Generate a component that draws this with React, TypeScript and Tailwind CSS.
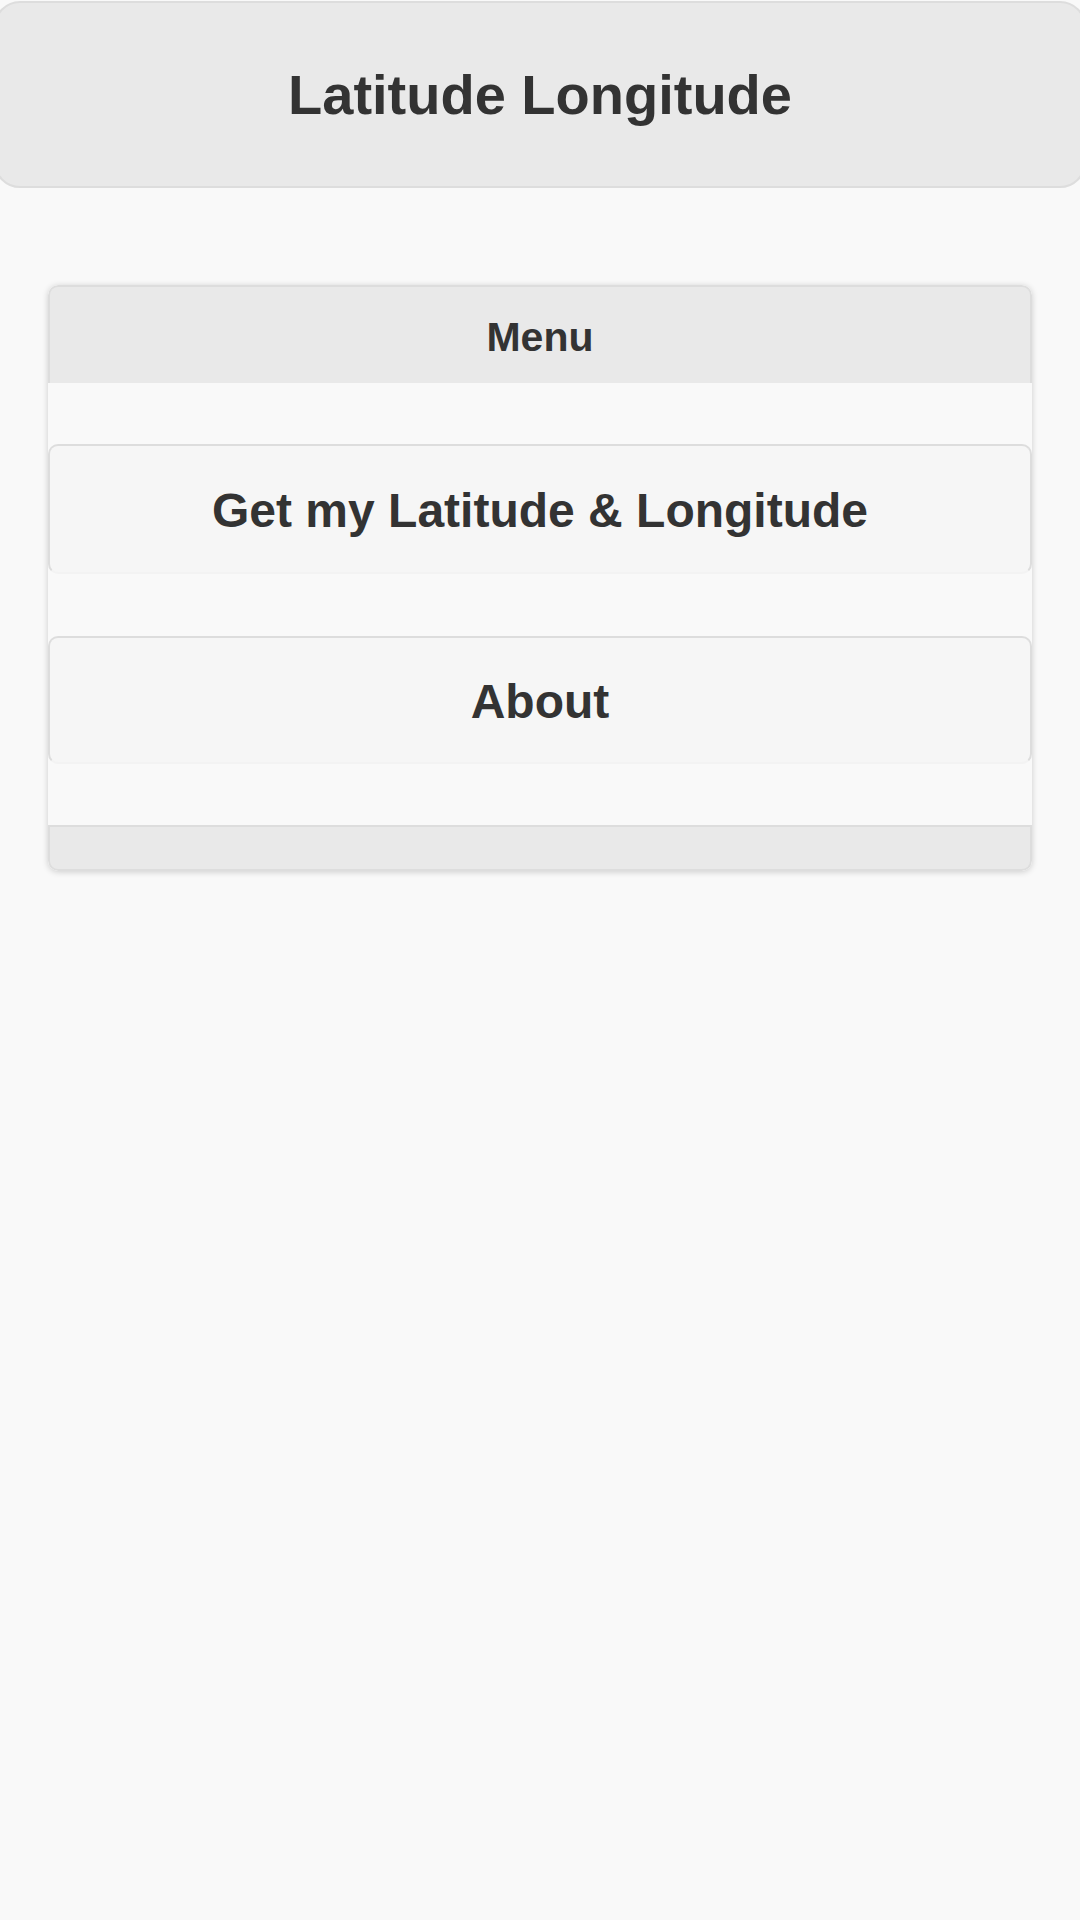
export default function App() {
  return (
    <div className="min-h-[1920px] bg-[#f9f9f9] text-[#333] overflow-hidden" style={{ fontFamily: '"Liberation Sans", Arial, sans-serif' }}>
      {/* top bar */}
      <div className="h-[187px] -mx-[6px] flex items-center justify-center bg-[#e9e9e9] border-2 border-[#dddddd] rounded-[26px] mt-[1px]">
        <h1 className="text-[56px] font-bold leading-none">Latitude Longitude</h1>
      </div>

      {/* menu panel */}
      <div className="mx-[48px] mt-[97px] rounded-[10px] shadow-[0_1px_6px_rgba(0,0,0,0.18)] overflow-hidden">
        <div className="h-[98px] pt-[4px] flex items-center justify-center bg-[#e9e9e9] border-2 border-b-0 border-[#dddddd] rounded-t-[10px]">
          <span className="text-[41px] font-bold leading-none">Menu</span>
        </div>
        <div className="bg-[#f9f9f9] py-[61px] flex flex-col gap-[62px]">
          <button className="h-[130px] pt-[4px] w-full flex items-center justify-center bg-[#f6f6f6] border-2 border-[#dddddd] border-b-[#f3f3f3] rounded-[10px] text-[48px] font-bold leading-none text-[#333]">
            Get my Latitude &amp; Longitude
          </button>
          <button className="h-[128px] pt-[3px] w-full flex items-center justify-center bg-[#f6f6f6] border-2 border-[#dddddd] border-b-[#f3f3f3] rounded-[10px] text-[48px] font-bold leading-none text-[#333]">
            About
          </button>
        </div>
        <div className="h-[46px] bg-[#e9e9e9] border-2 border-[#dddddd] rounded-b-[10px]" />
      </div>
    </div>
  )
}
